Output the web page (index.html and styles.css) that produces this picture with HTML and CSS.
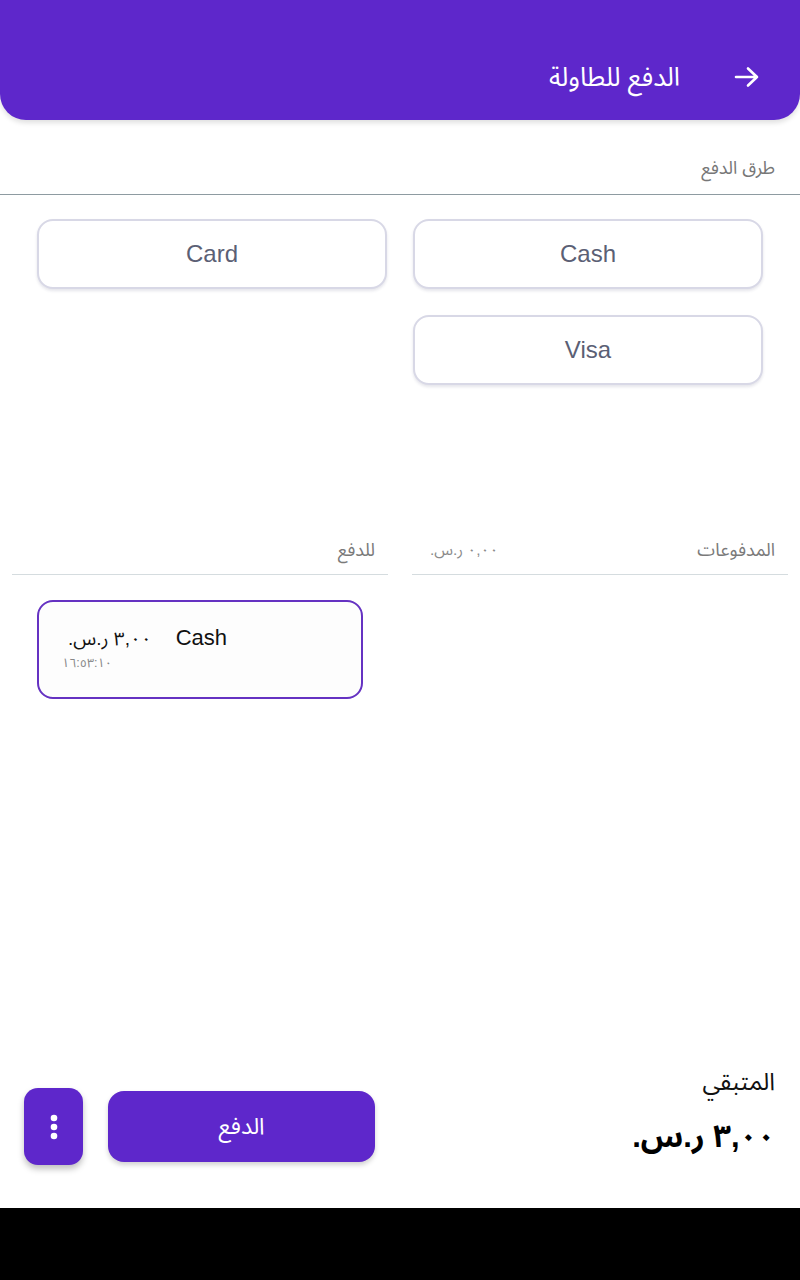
FILE: index.html
```html
<!DOCTYPE html>
<html lang="ar" dir="rtl">
<head>
<meta charset="utf-8">
<title>الدفع للطاولة</title>
<link rel="stylesheet" href="styles.css">
</head>
<body>
<div class="screen">
  <header class="appbar">
    <svg class="back" width="26" height="24" viewBox="0 0 26 24" aria-hidden="true">
      <path d="M2 12 H23 M14 3.5 L23 12 L14 20.5" fill="none" stroke="#fff" stroke-width="2.6" stroke-linecap="round" stroke-linejoin="round"/>
    </svg>
    <h1 class="title">الدفع للطاولة</h1>
  </header>

  <section class="methods">
    <div class="section-label">طرق الدفع</div>
    <div class="method-grid">
      <button class="method">Cash</button>
      <button class="method">Card</button>
      <button class="method">Visa</button>
    </div>
  </section>

  <section class="ledger">
    <div class="col">
      <div class="col-head">
        <span class="col-title">المدفوعات</span>
        <span class="col-amount">٠,٠٠ ر.س.</span>
      </div>
    </div>
    <div class="col">
      <div class="col-head">
        <span class="col-title">للدفع</span>
      </div>
      <div class="pay-item" dir="ltr">
        <div class="pay-row">
          <span class="pay-amount" dir="rtl">٣,٠٠ ر.س.</span>
          <span class="pay-name">Cash</span>
        </div>
        <div class="pay-time">١٦:٥٣:١٠</div>
      </div>
    </div>
  </section>

  <footer class="footer">
    <div class="remaining">
      <div class="remaining-label">المتبقي</div>
      <div class="remaining-value">٣,٠٠ ر.س.</div>
    </div>
    <div class="actions">
      <button class="pay-btn">الدفع</button>
      <button class="more-btn" aria-label="more">
        <svg width="10" height="28" viewBox="0 0 10 28" aria-hidden="true">
          <circle cx="5" cy="5" r="3.3" fill="#fff"/>
          <circle cx="5" cy="14" r="3.3" fill="#fff"/>
          <circle cx="5" cy="23" r="3.3" fill="#fff"/>
        </svg>
      </button>
    </div>
  </footer>
</div>
<div class="navbar"></div>
</body>
</html>
```

FILE: styles.css
```css
* { box-sizing: border-box; }

html, body {
  margin: 0;
  padding: 0;
}

body {
  width: 800px;
  height: 1280px;
  display: flex;
  flex-direction: column;
  background: #fff;
  font-family: "Liberation Sans", "Noto Sans Arabic", "DejaVu Sans", sans-serif;
  overflow: hidden;
}

.screen {
  height: 1208px;
  display: flex;
  flex-direction: column;
  background: #fff;
}

.navbar {
  height: 72px;
  background: #000;
}

/* App bar */
.appbar {
  height: 120px;
  background: #5e27cb;
  border-radius: 0 0 26px 26px;
  display: flex;
  align-items: center;
  padding: 34px 40px 0 0;
  gap: 54px;
  box-shadow: 0 3px 5px rgba(0, 0, 0, 0.12);
  flex-shrink: 0;
}

.back { display: block; }

.title {
  margin: 0;
  color: #fff;
  font-size: 26px;
  font-weight: normal;
  line-height: 36px;
}

/* Payment methods */
.methods { flex-shrink: 0; }

.section-label {
  height: 75px;
  padding: 35px 25px 0 0;
  color: #777;
  font-size: 18px;
  line-height: 26px;
  border-bottom: 1px solid #8e9ba1;
}

.method-grid {
  display: grid;
  grid-template-columns: 1fr 1fr;
  gap: 26px;
  padding: 24px 37px 0 37px;
}

.method {
  height: 70px;
  border: 2px solid #d8d8e6;
  border-radius: 16px;
  background: #fff;
  box-shadow: 0 2px 3px rgba(40, 40, 90, 0.12);
  color: #5b5f75;
  font-family: "Liberation Sans", sans-serif;
  font-size: 24px;
  padding: 0;
}

/* Ledger */
.ledger {
  flex: 1;
  display: grid;
  grid-template-columns: 1fr 1fr;
  gap: 24px;
  padding: 144px 12px 0 12px;
}

.col-head {
  display: flex;
  justify-content: space-between;
  align-items: center;
  height: 46px;
  padding: 0 13px 4px 18px;
  border-bottom: 1px solid #d5dcdf;
}

.col-title {
  color: #7a7a7a;
  font-size: 18px;
}

.col-amount {
  color: #8a8a8a;
  font-size: 15.5px;
}

.pay-item {
  margin: 25px 25px 0 25px;
  height: 99px;
  border: 2px solid #6532c2;
  border-radius: 16px;
  padding: 17px 0 0 23px;
  background: #fdfdfd;
}

.pay-row {
  display: flex;
  align-items: baseline;
  gap: 24px;
}

.pay-amount {
  font-size: 19px;
  color: #111;
  padding-left: 6px;
}

.pay-name {
  font-family: "Liberation Sans", sans-serif;
  font-size: 22px;
  color: #111;
}

.pay-time {
  margin-top: -9px;
  color: #888;
  font-size: 12.5px;
}

/* Footer */
.footer {
  flex-shrink: 0;
  display: flex;
  align-items: flex-end;
  justify-content: space-between;
  padding: 0 25px 43px 24px;
}

.remaining {
  margin-bottom: 6px;
}

.remaining-label {
  font-size: 24px;
  line-height: 30px;
  color: #111;
}

.remaining-value {
  margin-top: 18px;
  font-size: 31px;
  font-weight: bold;
  line-height: 44px;
  color: #000;
}

.actions {
  display: flex;
  align-items: center;
  gap: 25px;
}

.pay-btn {
  width: 267px;
  height: 71px;
  border: none;
  border-radius: 16px;
  background: #5e27cb;
  color: #fff;
  font-size: 23px;
  box-shadow: 0 3px 5px rgba(0, 0, 0, 0.18);
  font-family: inherit;
}

.more-btn {
  width: 59px;
  height: 77px;
  border: none;
  border-radius: 14px;
  background: #5e27cb;
  box-shadow: 0 4px 6px rgba(0, 0, 0, 0.25);
  display: flex;
  align-items: center;
  justify-content: center;
  padding: 0;
}
```
